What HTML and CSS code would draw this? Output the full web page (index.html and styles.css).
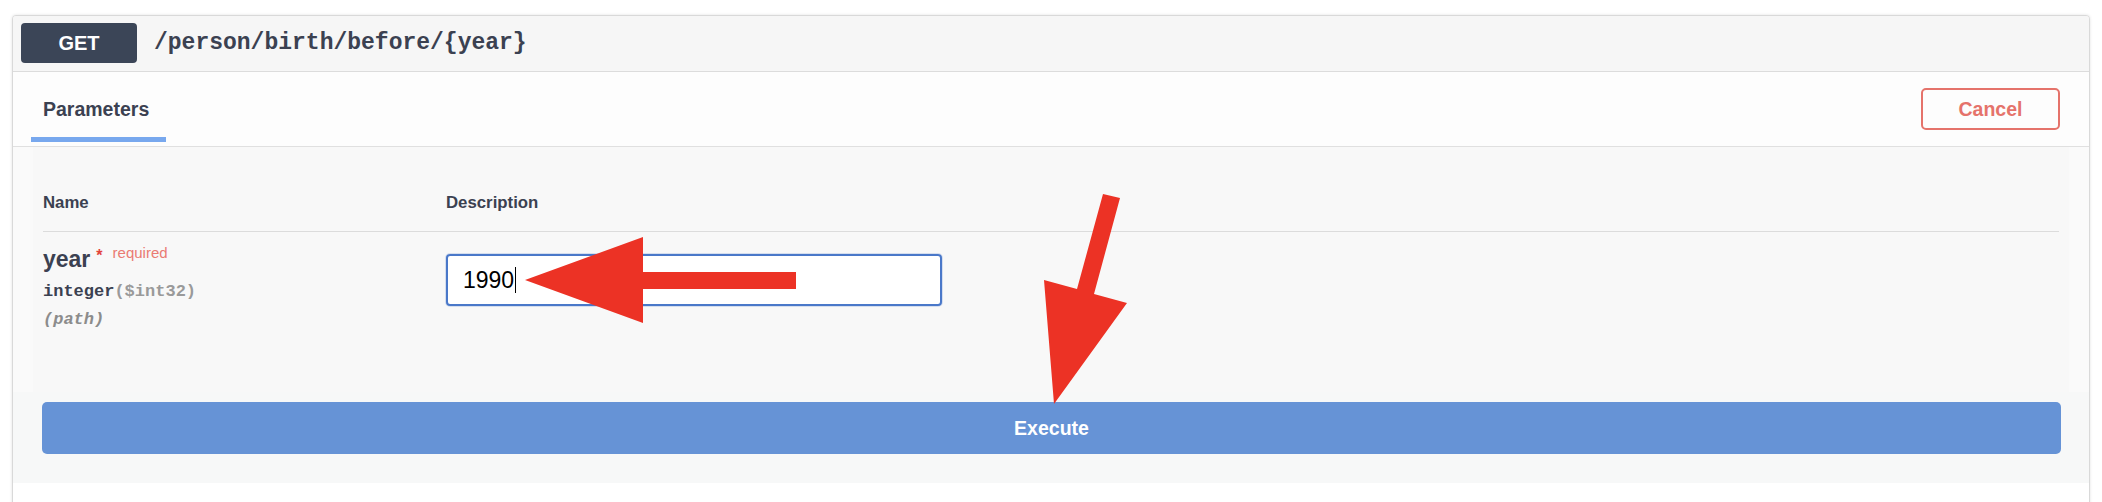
FILE: index.html
```html
<!DOCTYPE html>
<html>
<head>
<meta charset="utf-8">
<title>GET /person/birth/before/{year}</title>
<link rel="stylesheet" href="styles.css">
</head>
<body>
<div class="opblock">
  <div class="summary">
    <span class="method">GET</span>
    <span class="path">/person/birth/before/{year}</span>
  </div>
  <div class="section-header">
    <div class="tab"><span class="tab-label">Parameters</span></div>
    <button class="btn-cancel">Cancel</button>
  </div>
  <div class="op-body">
    <div class="params">
      <div class="row head">
        <div class="col-name">Name</div>
        <div class="col-desc">Description</div>
      </div>
      <div class="row param">
        <div class="col-name">
          <div class="pname">year<span class="star">*</span><span class="req">required</span></div>
          <div class="ptype">integer<span class="fmt">($int32)</span></div>
          <div class="pin">(path)</div>
        </div>
        <div class="col-desc">
          <div class="input"><span class="val">1990</span><span class="caret"></span></div>
        </div>
      </div>
    </div>
    <div class="execute-wrap"><button class="btn-exec">Execute</button></div>
  </div>
  <div class="next"></div>
</div>
<svg class="annot" width="2102" height="502" viewBox="0 0 2102 502" xmlns="http://www.w3.org/2000/svg">
  <polygon fill="#ec3225" points="525,280 643,237 643,272 796,272 796,289 643,289 643,323"/>
  <polygon fill="#ec3225" points="1103,194 1120,198 1094,294 1127,303 1054,404 1044,280 1077,289"/>
</svg>
</body>
</html>
```

FILE: styles.css
```css
html, body {
  overflow: hidden;
}
body {
  margin: 0;
  padding: 15px 0 0 12px;
  background: #ffffff;
  font-family: "Liberation Sans", Arial, sans-serif;
  color: #3b4151;
}
.opblock {
  width: 2078px;
  box-sizing: border-box;
  border: 1px solid #d9d9d9;
  border-radius: 4px;
  box-shadow: 0 0 3px rgba(0, 0, 0, 0.12);
  background: #fafafa;
  overflow: hidden;
}
.summary {
  display: flex;
  align-items: center;
  padding: 7px 8px 8px;
  background: #f6f6f6;
  border-bottom: 1px solid #dcdcdc;
}
.method {
  width: 116px;
  height: 40px;
  border-radius: 4px;
  background: #3b4557;
  color: #ffffff;
  font-weight: 700;
  font-size: 20px;
  display: flex;
  align-items: center;
  justify-content: center;
}
.path {
  margin-left: 17px;
  font-family: "Liberation Mono", "Courier New", monospace;
  font-weight: 700;
  font-size: 23px;
  color: #3b4151;
}
.section-header {
  display: flex;
  justify-content: space-between;
  height: 74px;
  padding: 0 29px 0 18px;
  background: #fdfdfd;
  border-bottom: 1px solid #e0e0e0;
}
.tab {
  width: 135px;
  box-sizing: border-box;
  padding: 24px 12px 0;
  border-bottom: 5px solid #78a8ee;
  margin-bottom: 4px;
}
.tab-label {
  display: block;
  font-size: 19.5px;
  font-weight: 700;
  line-height: 26px;
}
.btn-cancel {
  align-self: center;
  width: 139px;
  height: 42px;
  border: 2px solid #e5736b;
  border-radius: 5px;
  background: transparent;
  color: #e5736b;
  font-family: "Liberation Sans", Arial, sans-serif;
  font-weight: 700;
  font-size: 19.5px;
  padding: 0;
}
.op-body {
  background: #fafafa;
}
.params {
  margin: 0 20px;
  background: #f8f8f8;
  padding: 46px 10px 62px;
}
.row {
  display: flex;
}
.col-name {
  width: 403px;
  flex: none;
}
.col-desc {
  flex: 1;
}
.head {
  font-size: 16.8px;
  font-weight: 700;
  line-height: 20px;
  padding-bottom: 18px;
  border-bottom: 1px solid #dcdcdc;
}
.param .col-name {
  padding-top: 13px;
}
.pname {
  font-size: 23px;
  font-weight: 700;
  line-height: 28px;
}
.star {
  position: relative;
  top: -6px;
  margin-left: 6px;
  font-size: 16px;
  line-height: 0;
  color: #e2443b;
}
.req {
  position: relative;
  top: -9px;
  margin-left: 10px;
  font-size: 15px;
  font-weight: 400;
  line-height: 0;
  color: #ea7b73;
}
.ptype {
  margin-top: 9px;
  font-family: "Liberation Mono", "Courier New", monospace;
  font-weight: 700;
  font-size: 17px;
  line-height: 20px;
  color: #3b4151;
}
.fmt {
  color: #9a9a9a;
}
.pin {
  margin-top: 8px;
  font-family: "Liberation Mono", "Courier New", monospace;
  font-weight: 700;
  font-style: italic;
  font-size: 17px;
  line-height: 20px;
  color: #8c8c8c;
}
.param .col-desc {
  padding-top: 22px;
}
.input {
  width: 496px;
  height: 52px;
  box-sizing: border-box;
  border: 2px solid #4a78c9;
  border-radius: 4px;
  box-shadow: 0 0 0 1px rgba(74, 120, 201, 0.2);
  background: #ffffff;
  padding-left: 15px;
  display: flex;
  align-items: center;
}
.val {
  font-size: 23px;
  color: #000000;
}
.caret {
  width: 1px;
  height: 26px;
  margin-left: 1px;
  background: #000000;
}
.execute-wrap {
  padding: 10px 28px 29px 29px;
  background: #f7f8f8;
}
.btn-exec {
  display: block;
  width: 100%;
  height: 52px;
  border: none;
  border-radius: 5px;
  background: #6693d6;
  color: #ffffff;
  font-family: "Liberation Sans", Arial, sans-serif;
  font-weight: 700;
  font-size: 19.5px;
  padding: 0;
}
.next {
  height: 40px;
  background: #ffffff;
}
.annot {
  position: absolute;
  left: 0;
  top: 0;
  pointer-events: none;
}
```
